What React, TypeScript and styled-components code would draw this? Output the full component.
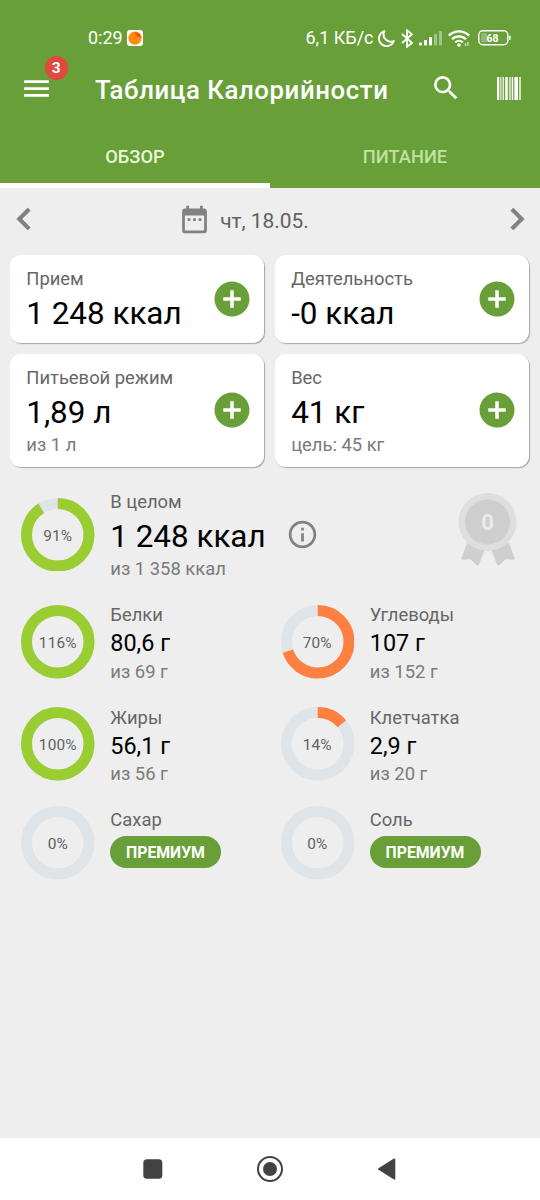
import React from "react";
import styled, { createGlobalStyle } from "styled-components";

const Global = createGlobalStyle`
  * { box-sizing: border-box; }
  html, body { margin: 0; padding: 0; }
  body { background: #eee; font-family: Roboto, "Noto Sans", sans-serif; }
`;

const GREEN = "#689f38";
const LIME = "#9acd32";
const ORANGE = "#ff8040";

const Screen = styled.div`
  width: 540px;
  height: 1200px;
  display: flex;
  flex-direction: column;
  background: #eeeeee;
  overflow: hidden;
`;

const Header = styled.header`
  height: 188px;
  flex: none;
  background: ${GREEN};
  color: #fff;
  display: flex;
  flex-direction: column;
`;

const StatusBar = styled.div`
  height: 52px;
  padding: 24px 29.5px 0 88px;
  display: flex;
  justify-content: space-between;
`;

const StatusGroup = styled.div`
  display: flex;
  height: 28px;
  align-items: center;
  font-size: 18px;
  line-height: 28px;
`;

const StatusIcon = styled.svg<{ $gap: number }>`
  display: block;
  flex: none;
  margin-left: ${(p) => p.$gap}px;
`;

const AppBar = styled.div`
  height: 78px;
  padding: 0 19.5px 6px 20px;
  display: flex;
  align-items: center;
`;

const MenuButton = styled.div`
  position: relative;
  width: 33px;
  height: 33px;
`;

const Badge = styled.span`
  position: absolute;
  left: 24.5px;
  top: -15.5px;
  width: 23.5px;
  height: 23.5px;
  border-radius: 50%;
  background: #dd4b3e;
  font-size: 15.5px;
  font-weight: 700;
  line-height: 25.5px;
  text-align: center;
`;

const Title = styled.h1`
  margin: 3px 0 0 42px;
  flex: 1;
  font-size: 25.8px;
  font-weight: 500;
  letter-spacing: 0.57px;
  line-height: 30px;
  white-space: nowrap;
`;

const ActionIcon = styled.svg<{ $gap?: number }>`
  display: block;
  flex: none;
  margin-right: ${(p) => p.$gap ?? 0}px;
`;

const Tabs = styled.nav`
  height: 58px;
  display: flex;
`;

const Tab = styled.div<{ $active?: boolean }>`
  flex: 1;
  text-align: center;
  font-size: 18.3px;
  font-weight: 500;
  line-height: 54px;
  height: 58px;
  color: ${(p) => (p.$active ? "#e9f8d8" : "#bfe2a0")};
  border-bottom: ${(p) => (p.$active ? "5.5px solid #fff" : "none")};
`;

const DateBar = styled.div`
  height: 66.5px;
  flex: none;
  padding: 0 1.5px 4px;
  display: flex;
  align-items: center;
  justify-content: space-between;
  color: #818181;
`;

const Chevron = styled.svg`
  display: block;
  fill: currentColor;
  stroke: currentColor;
  stroke-width: 0.35;
`;

const DateLabel = styled.div`
  display: flex;
  align-items: center;
  gap: 9.5px;
  margin-right: 53.5px;
  font-size: 20.9px;
  line-height: 30px;
  color: #616161;
`;

const DateText = styled.span`
  padding-top: 3px;
`;

const Cards = styled.section`
  padding: 0 10.7px 0 10.3px;
  display: grid;
  grid-template-columns: 1fr 1fr;
  grid-template-rows: 88.5px 113px;
  gap: 10.7px;
`;

const Card = styled.div`
  display: flex;
  align-items: center;
  justify-content: space-between;
  padding: 0 11px 0 16px;
  border-radius: 11px;
  background: #fff;
  box-shadow: 1px 1px 1px rgba(0, 0, 0, 0.3);
`;

const Lines = styled.div<{ $top?: number }>`
  display: flex;
  flex-direction: column;
  align-items: flex-start;
  padding-top: ${(p) => p.$top ?? 0}px;
  white-space: nowrap;
`;

const Label = styled.span`
  font-size: 18.4px;
  line-height: 24px;
  color: #666;
`;

const Value = styled.span<{ $small?: boolean }>`
  font-size: ${(p) => (p.$small ? 23.4 : 31.4)}px;
  line-height: ${(p) => (p.$small ? 32 : 45)}px;
  margin-bottom: ${(p) => (p.$small ? 1.7 : -1)}px;
  color: #000;
`;

const Hint = styled.span`
  font-size: 18.4px;
  line-height: 22px;
  color: #7b7b7b;
`;

const Summary = styled.section`
  padding: 23.8px 0 0 21px;
  display: flex;
  flex-direction: column;
`;

const Row = styled.div<{ $height: number }>`
  display: flex;
  align-items: flex-start;
  height: ${(p) => p.$height}px;
`;

const Nutrient = styled.div<{ $auto?: boolean }>`
  width: ${(p) => (p.$auto ? "auto" : "259.5px")};
  display: flex;
  gap: 15.8px;
`;

const RingWrap = styled.div<{ $top: number }>`
  width: 73.5px;
  height: 73.5px;
  margin-top: ${(p) => p.$top}px;
  display: grid;
  flex: none;
  place-items: center;
  & > * { grid-area: 1 / 1; }
`;

const Percent = styled.span`
  padding-top: 2px;
  font-size: 15.4px;
  letter-spacing: 0.15px;
  line-height: 20px;
  color: #616161;
`;

const Pill = styled.span`
  height: 32px;
  width: 111px;
  margin: 4.1px 0 0 -0.3px;
  border-radius: 16px;
  background: ${GREEN};
  color: #fff;
  font-size: 15.8px;
  font-weight: 700;
  line-height: 34px;
  text-align: center;
`;

const InfoIcon = styled.svg`
  display: block;
  flex: none;
  margin: 27.7px 0 0 20.5px;
`;

const Medal = styled.svg`
  display: block;
  flex: none;
  margin: 2.2px 20px 0 auto;
`;

const SystemNav = styled.footer`
  margin-top: auto;
  height: 62px;
  flex: none;
  background: #fff;
  display: flex;
  justify-content: center;
  align-items: center;
  gap: 89px;
`;

function Ring({ percent, color = LIME, top = 1.9 }: { percent: number; color?: string; top?: number }) {
  const r = 31.25;
  const c = 2 * Math.PI * r;
  const part = Math.min(percent, 100) / 100;
  return (
    <RingWrap $top={top}>
      <svg width="73.5" height="73.5" viewBox="0 0 73.5 73.5" fill="none" strokeWidth="11">
        <circle cx="36.75" cy="36.75" r={r} stroke="#dfe4e8" />
        {part > 0 && (
          <circle
            cx="36.75"
            cy="36.75"
            r={r}
            stroke={color}
            strokeDasharray={part === 1 ? undefined : `${c * part} ${c}`}
            transform="rotate(-90 36.75 36.75)"
          />
        )}
      </svg>
      <Percent>{percent}%</Percent>
    </RingWrap>
  );
}

function AddIcon() {
  return (
    <svg width="42" height="42" viewBox="0 0 24 24" fill={GREEN}>
      <path d="M12 2C6.48 2 2 6.48 2 12s4.48 10 10 10 10-4.48 10-10S17.52 2 12 2zm5 11h-4v4h-2v-4H7v-2h4V7h2v4h4v2z" />
    </svg>
  );
}

type StatProps = { label: string; value: string; hint?: string };

function StatCard({ label, value, hint }: StatProps) {
  return (
    <Card>
      <Lines $top={hint ? 2.2 : 4}>
        <Label>{label}</Label>
        <Value>{value}</Value>
        {hint && <Hint>{hint}</Hint>}
      </Lines>
      <AddIcon />
    </Card>
  );
}

function NutrientCell({ percent, color, label, value, hint }: StatProps & { percent: number; color?: string }) {
  return (
    <Nutrient>
      <Ring percent={percent} color={color} />
      <Lines>
        <Label>{label}</Label>
        <Value $small>{value}</Value>
        <Hint>{hint}</Hint>
      </Lines>
    </Nutrient>
  );
}

function PremiumCell({ label }: { label: string }) {
  return (
    <Nutrient>
      <Ring percent={0} top={-1.6} />
      <Lines>
        <Label>{label}</Label>
        <Pill>ПРЕМИУМ</Pill>
      </Lines>
    </Nutrient>
  );
}

const BARS = [
  [0, 2.3], [3.4, 1], [5.6, 1.2], [8.2, 2.6], [12.3, 1.2], [14.7, 1.5], [17.4, 3.6], [22.3, 1.4],
];

export default function App() {
  return (
    <Screen>
      <Global />
      <Header>
        <StatusBar>
          <StatusGroup>
            0:29
            <StatusIcon $gap={4} width="16" height="16" viewBox="0 0 16 16">
              <rect width="16" height="16" rx="3" fill="#fff" />
              <circle cx="8" cy="8.2" r="6.6" fill="#ff8a0c" />
              <path d="M8 2.2a6.6 6.6 0 0 1 6.5 5L10.5 7 8 4z" fill="#f4511e" />
            </StatusIcon>
          </StatusGroup>
          <StatusGroup>
            6,1 КБ/с
            <StatusIcon $gap={4} width="17" height="17" viewBox="0 0 17 17" fill="none" stroke="#fff" strokeWidth="1.9" strokeLinejoin="round">
              <path d="M6.4 1.2A7.6 7.6 0 1 0 15.8 11 7.2 7.2 0 0 1 6.4 1.2z" />
            </StatusIcon>
            <StatusIcon $gap={6} width="12" height="19" viewBox="0 0 12 19" fill="none" stroke="#fff" strokeWidth="1.8">
              <path d="M1 5l10 8.8-5 4V1.3l5 4L1 14" />
            </StatusIcon>
            <StatusIcon $gap={6} width="24" height="16" viewBox="0 0 24 16" fill="#fff">
              <rect x="0" y="12.5" width="3" height="3" rx="1" />
              <rect x="5" y="10" width="3" height="5.5" rx="1" />
              <rect x="10" y="7" width="3" height="8.5" rx="1" />
              <rect x="15" y="4" width="3" height="11.5" rx="1" opacity=".4" />
              <rect x="20" y="1" width="3" height="14.5" rx="1" opacity=".4" />
            </StatusIcon>
            <StatusIcon $gap={5} width="22" height="17" viewBox="0 0 22 17" fill="none" stroke="#fff" strokeWidth="2.3">
              <path d="M.8 5.6a14.5 14.5 0 0 1 20.4 0M4 9.2a10 10 0 0 1 14 0M7.2 12.4a5.6 5.6 0 0 1 7.6 0" />
              <circle cx="11" cy="15" r="1.8" fill="#fff" stroke="none" />
              <path d="M17.5 13v3M20 12v4" strokeWidth="1.3" opacity=".7" />
            </StatusIcon>
            <StatusIcon $gap={8} width="33" height="16" viewBox="0 0 33 16">
              <rect x=".8" y=".8" width="29" height="14" rx="4" fill="none" stroke="#fff" strokeWidth="1.4" />
              <rect x="3" y="3" width="6" height="9.6" rx="1" fill="#fff" opacity=".28" />
              <rect x="31" y="5.8" width="1.7" height="4" fill="#fff" />
              <text x="14.5" y="11.6" textAnchor="middle" fontSize="10.5" fontWeight="700" fill="#fff">68</text>
            </StatusIcon>
          </StatusGroup>
        </StatusBar>
        <AppBar>
          <MenuButton>
            <svg width="33" height="33" viewBox="0 0 24 24" fill="#fff">
              <path d="M3 18h18v-2H3v2zm0-5h18v-2H3v2zm0-7v2h18V6H3z" />
            </svg>
            <Badge>3</Badge>
          </MenuButton>
          <Title>Таблица Калорийности</Title>
          <ActionIcon $gap={34.8} width="32" height="32" viewBox="0 0 24 24" fill="#fff">
            <path d="M15.5 14h-.79l-.28-.27A6.471 6.471 0 0 0 16 9.5 6.5 6.5 0 1 0 9.5 16c1.61 0 3.09-.59 4.23-1.57l.27.28v.79l5 4.99L20.49 19l-4.99-5zm-6 0C7.01 14 5 11.99 5 9.5S7.01 5 9.5 5 14 7.01 14 9.5 11.99 14 9.5 14z" />
          </ActionIcon>
          <ActionIcon width="24" height="23" viewBox="0 0 24 23" fill="#fff">
            {BARS.map(([x, w]) => (
              <rect key={x} x={x} width={w} height="23" />
            ))}
          </ActionIcon>
        </AppBar>
        <Tabs>
          <Tab $active>ОБЗОР</Tab>
          <Tab>ПИТАНИЕ</Tab>
        </Tabs>
      </Header>

      <DateBar>
        <Chevron width="44" height="44" viewBox="0 0 24 24">
          <path d="M15.41 7.41L14 6l-6 6 6 6 1.41-1.41L10.83 12z" />
        </Chevron>
        <DateLabel>
          <svg width="33" height="33" viewBox="0 0 24 24" fill="#818181">
            <path d="M9 11H7v2h2v-2zm4 0h-2v2h2v-2zm4 0h-2v2h2v-2zm2-7h-1V2h-2v2H8V2H6v2H5c-1.11 0-1.99.9-1.99 2L3 20a2 2 0 0 0 2 2h14c1.1 0 2-.9 2-2V6c0-1.1-.9-2-2-2zm0 16H5V9h14v11z" />
          </svg>
          <DateText>чт, 18.05.</DateText>
        </DateLabel>
        <Chevron width="44" height="44" viewBox="0 0 24 24">
          <path d="M10 6L8.59 7.41 13.17 12l-4.58 4.59L10 18l6-6z" />
        </Chevron>
      </DateBar>

      <Cards>
        <StatCard label="Прием" value="1 248 ккал" />
        <StatCard label="Деятельность" value="-0 ккал" />
        <StatCard label="Питьевой режим" value="1,89 л" hint="из 1 л" />
        <StatCard label="Вес" value="41 кг" hint="цель: 45 кг" />
      </Cards>

      <Summary>
        <Row $height={112.8}>
          <Nutrient $auto>
            <Ring percent={91} top={7.3} />
            <Lines>
              <Label>В целом</Label>
              <Value>1 248 ккал</Value>
              <Hint>из 1 358 ккал</Hint>
            </Lines>
          </Nutrient>
          <InfoIcon width="33" height="33" viewBox="0 0 24 24" fill="#818181">
            <path d="M11 7h2v2h-2zm0 4h2v6h-2zm1-9C6.48 2 2 6.48 2 12s4.48 10 10 10 10-4.48 10-10S17.52 2 12 2zm0 18c-4.41 0-8-3.59-8-8s3.59-8 8-8 8 3.59 8 8-3.59 8-8 8z" />
          </InfoIcon>
          <Medal width="64" height="76" viewBox="0 0 64 76">
            <path d="M11 50L5.5 65Q5 67 7 66.8L14 66 20.5 72Q22 73.5 23 71.5L29 56zM53 50L58.5 65Q59 67 57 66.8L50 66 43.5 72Q42 73.5 41 71.5L35 56z" fill="#cfcfcf" />
            <circle cx="31.5" cy="29" r="29" fill="#dedede" />
            <circle cx="31.5" cy="29" r="22.5" fill="#cecece" />
            <text x="31.5" y="36.5" textAnchor="middle" fontSize="22" fontWeight="700" fill="#eaeaea">0</text>
          </Medal>
        </Row>
        <Row $height={102.3}>
          <NutrientCell percent={116} label="Белки" value="80,6 г" hint="из 69 г" />
          <NutrientCell percent={70} color={ORANGE} label="Углеводы" value="107 г" hint="из 152 г" />
        </Row>
        <Row $height={102.3}>
          <NutrientCell percent={100} label="Жиры" value="56,1 г" hint="из 56 г" />
          <NutrientCell percent={14} color={ORANGE} label="Клетчатка" value="2,9 г" hint="из 20 г" />
        </Row>
        <Row $height={80}>
          <PremiumCell label="Сахар" />
          <PremiumCell label="Соль" />
        </Row>
      </Summary>

      <SystemNav>
        <svg width="28" height="28" viewBox="0 0 28 28" fill="#424242">
          <rect x="4.3" y="4.3" width="19" height="19.4" rx="3.5" />
        </svg>
        <svg width="28" height="28" viewBox="0 0 28 28" fill="#424242">
          <circle cx="14" cy="14" r="12" fill="none" stroke="#424242" strokeWidth="2" />
          <circle cx="14" cy="14" r="7" />
        </svg>
        <svg width="28" height="28" viewBox="0 0 28 28" fill="#424242">
          <path d="M5.5 13.2L21 3.5Q22.3 3 22.3 4.5V23.5Q22.3 25 21 24.5L5.5 14.8Q4.5 14 5.5 13.2z" />
        </svg>
      </SystemNav>
    </Screen>
  );
}
